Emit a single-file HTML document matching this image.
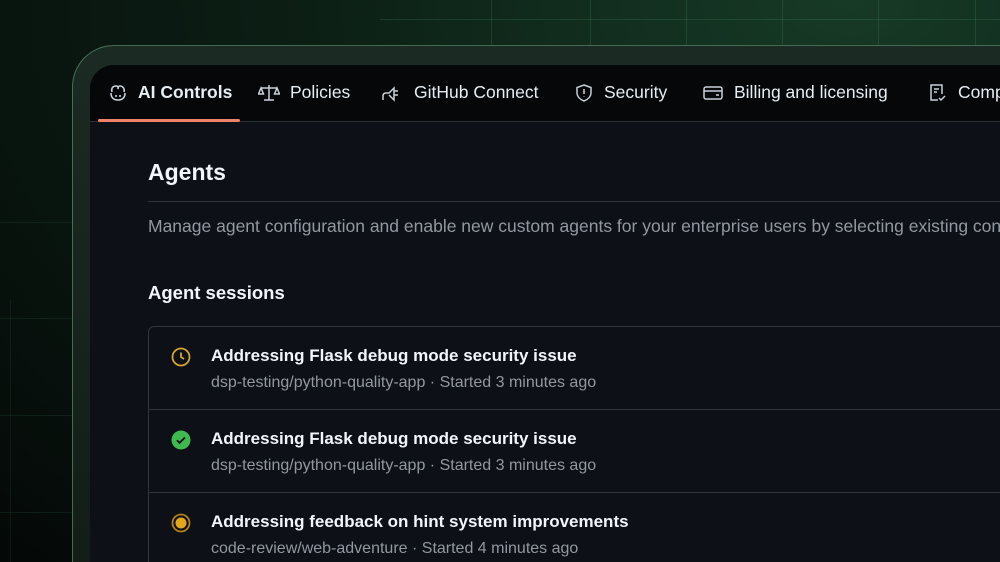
<!DOCTYPE html>
<html><head><meta charset="utf-8"><style>
*{margin:0;padding:0;box-sizing:border-box}
html,body{width:1000px;height:562px;overflow:hidden}
body{background:radial-gradient(ellipse at 85% 0%,#173a26 0%,#0c1f15 45%,#040807 100%);font-family:"Liberation Sans",sans-serif;position:relative}
.gl{position:absolute;background:rgba(70,160,100,.22)}
.frame{position:absolute;left:72px;top:45px;width:940px;height:530px;border:1.5px solid rgba(110,170,130,.55);border-radius:42px 0 0 0;background:linear-gradient(180deg,#1b2a22 0%,#141d18 100%)}
.panel{position:absolute;left:90px;top:65px;width:920px;height:510px;border-radius:24px 0 0 0;background:#0d1117;overflow:hidden}
.nav{height:57px;background:#050709;border-bottom:1px solid #2a2f36;position:relative}
.tab{position:absolute;top:17px;font-size:17.5px;color:#e6edf3;display:flex;align-items:center;white-space:nowrap}
.tab svg{margin-right:10px}
.ul{position:absolute;left:8px;top:54px;width:142px;height:3px;background:#f0826a;border-radius:2px}
h1{position:absolute;left:58px;top:94px;font-size:23px;color:#f0f6fc;font-weight:bold}
.hr{position:absolute;left:58px;top:136px;width:900px;height:1px;background:#30363d}
.desc{position:absolute;left:58px;top:151px;font-size:17.5px;color:#9198a1;white-space:nowrap}
h2{position:absolute;left:58px;top:217px;font-size:18.5px;color:#f0f6fc;font-weight:bold}
.box{position:absolute;left:58px;top:261px;width:900px;height:400px;border:1px solid #30363d;border-radius:6px}
.row{position:absolute;left:0;width:100%;height:83px;border-bottom:1px solid #30363d}
.row .ic{position:absolute;left:22px;top:20px}
.t{position:absolute;left:62px;top:19px;font-size:17px;font-weight:bold;color:#f0f6fc;white-space:nowrap}
.s{position:absolute;left:62px;top:47px;font-size:16px;color:#9198a1;white-space:nowrap}
</style></head><body>
<div class="gl" style="left:491px;top:0;width:1px;height:45px"></div>
<div class="gl" style="left:590px;top:0;width:1px;height:45px"></div>
<div class="gl" style="left:686px;top:0;width:1px;height:45px"></div>
<div class="gl" style="left:782px;top:0;width:1px;height:45px"></div>
<div class="gl" style="left:878px;top:0;width:1px;height:45px"></div>
<div class="gl" style="left:975px;top:0;width:1px;height:45px"></div>
<div class="gl" style="left:380px;top:19px;width:620px;height:1px"></div>
<div class="gl" style="left:0;top:222px;width:72px;height:1px;opacity:.6"></div>
<div class="gl" style="left:0;top:318px;width:72px;height:1px;opacity:.6"></div>
<div class="gl" style="left:0;top:415px;width:72px;height:1px;opacity:.6"></div>
<div class="gl" style="left:0;top:512px;width:72px;height:1px;opacity:.6"></div>
<div class="gl" style="left:10px;top:300px;width:1px;height:262px;opacity:.5"></div>
<div class="frame"></div>
<div class="panel">
 <div class="nav">
  <div class="tab" style="left:18px;font-weight:bold"><svg width="20" height="20" viewBox="0 0 20 20" fill="none" stroke="#c9d1d9" stroke-width="1.6"><path d="M4 9c-1-4 1-6 4-6s2 3 2 3 0-3 2-3 5 2 4 6"/><path d="M3 10c0 5 3 7 7 7s7-2 7-7"/><path d="M8 12v2M12 12v2"/></svg>AI Controls</div>
  <div class="tab" style="left:168px"><svg width="22" height="20" viewBox="0 0 22 20" fill="none" stroke="#c9d1d9" stroke-width="1.5"><path d="M11 2v15M6 17h10M3 5h16M3 5l-2.5 6h5zM19 5l-2.5 6h5z"/></svg>Policies</div>
  <div class="tab" style="left:292px"><svg width="22" height="20" viewBox="0 0 22 20" fill="none" stroke="#c9d1d9" stroke-width="1.5"><path d="M1 17v-4c0-2 1-3 3-3h3l5-5v12l-5-5M12 8h4M12 12h4"/></svg>GitHub Connect</div>
  <div class="tab" style="left:484px"><svg width="20" height="20" viewBox="0 0 20 20" fill="none" stroke="#c9d1d9" stroke-width="1.5"><path d="M10 2l7 2.5v5c0 4-3 7-7 8.5-4-1.5-7-4.5-7-8.5v-5z"/><path d="M10 6v5M10 13.5v.5"/></svg>Security</div>
  <div class="tab" style="left:612px"><svg width="22" height="20" viewBox="0 0 22 20" fill="none" stroke="#c9d1d9" stroke-width="1.5"><rect x="2" y="4" width="18" height="12" rx="2"/><path d="M2 8h18M14 12h3"/></svg>Billing and licensing</div>
  <div class="tab" style="left:836px"><svg width="22" height="20" viewBox="0 0 22 20" fill="none" stroke="#c9d1d9" stroke-width="1.5"><path d="M12 17H5V2h11v9M8 6h5M8 9h3M13 15l2 2 4-4"/></svg>Compliance</div>
  <div class="ul"></div>
 </div>
 <h1>Agents</h1>
 <div class="hr"></div>
 <div class="desc">Manage agent configuration and enable new custom agents for your enterprise users by selecting existing configurations</div>
 <h2>Agent sessions</h2>
 <div class="box">
  <div class="row" style="top:0"><svg class="ic" width="20" height="20" viewBox="0 0 20 20" fill="none" stroke="#d4a72c" stroke-width="1.8"><circle cx="10" cy="10" r="8.5"/><path d="M10 5.5V10l3 2"/></svg><div class="t">Addressing Flask debug mode security issue</div><div class="s">dsp-testing/python-quality-app · Started 3 minutes ago</div></div>
  <div class="row" style="top:83px"><svg class="ic" width="20" height="20" viewBox="0 0 20 20"><circle cx="10" cy="10" r="9.5" fill="#3fb950"/><path d="M6 10.2l2.6 2.6L14 7.5" fill="none" stroke="#0d1117" stroke-width="1.8"/></svg><div class="t">Addressing Flask debug mode security issue</div><div class="s">dsp-testing/python-quality-app · Started 3 minutes ago</div></div>
  <div class="row" style="top:166px;border-bottom:none"><svg class="ic" width="20" height="20" viewBox="0 0 20 20"><circle cx="10" cy="10" r="8.5" fill="none" stroke="#b08018" stroke-width="1.8"/><circle cx="10" cy="10" r="5.5" fill="#e3a51c"/></svg><div class="t">Addressing feedback on hint system improvements</div><div class="s">code-review/web-adventure · Started 4 minutes ago</div></div>
 </div>
</div>
</body></html>
